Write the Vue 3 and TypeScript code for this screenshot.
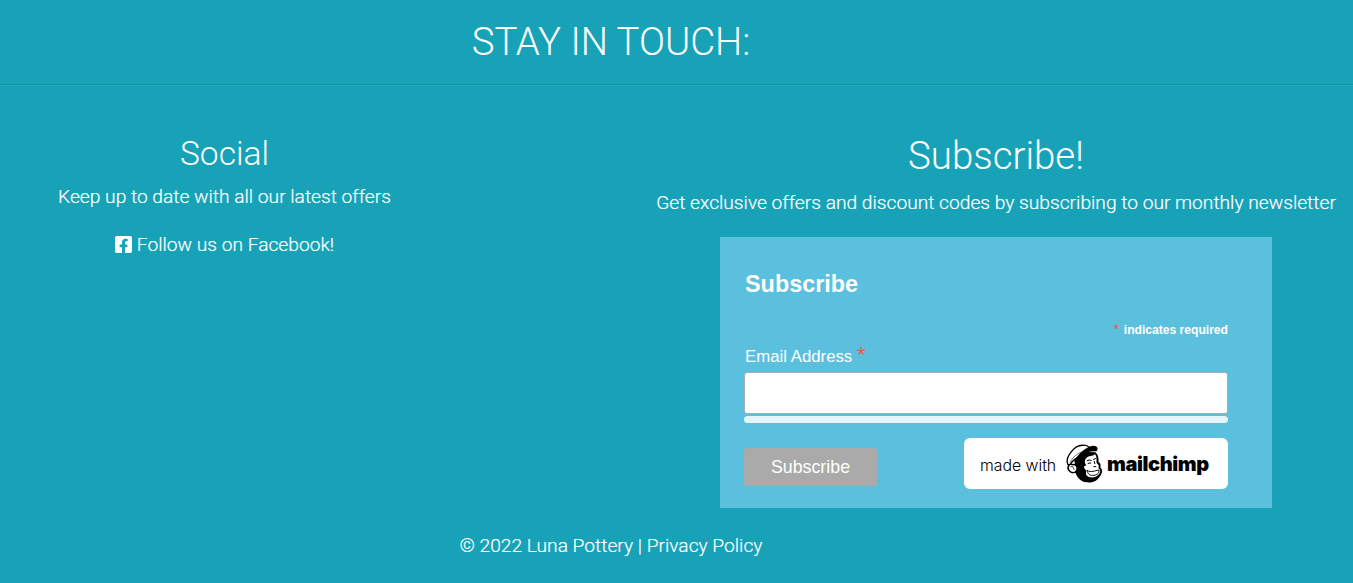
<script setup lang="ts">
import { ref } from 'vue'

const email = ref('')
</script>

<template>
  <footer class="footer">
    <h2 class="title"><span>STAY IN TOUCH:</span></h2>
    <div class="rule"></div>

    <div class="columns">
      <section class="social">
        <h3>Social</h3>
        <p class="lead">Keep up to date with all our latest offers</p>
        <a class="facebook">
          <svg viewBox="0 0 448 448" aria-hidden="true">
            <path fill="#fff" d="M400 0H48A48 48 0 0 0 0 48v352a48 48 0 0 0 48 48h137V296h-63v-72h63v-55c0-62 37-96 94-96 27 0 55 5 55 5v61h-31c-31 0-40 19-40 38v47h68l-11 72h-57v152h137a48 48 0 0 0 48-48V48a48 48 0 0 0-48-48z" />
          </svg>
          <span>Follow us on Facebook!</span>
        </a>
      </section>

      <section class="newsletter">
        <h2>Subscribe!</h2>
        <p class="lead">Get exclusive offers and discount codes by subscribing to our monthly newsletter</p>
        <form class="card" @submit.prevent>
          <h4>Subscribe</h4>
          <div class="required"><span class="star">*</span> indicates required</div>
          <label for="email">Email Address <span class="star">*</span></label>
          <input id="email" v-model="email" type="email" />
          <div class="response"></div>
          <div class="actions">
            <button type="submit">Subscribe</button>
            <a class="badge">
              <span class="made">made with</span>
              <svg class="chimp" viewBox="0 0 110 117" aria-hidden="true">
                <path d="M27 57C30 42 44 25 61 24L88 25C96 32 98 43 97 54C105 58 104 66 102 70C111 77 108 91 100 99C91 113 76 117 61 115C43 113 33 100 28 87C19 80 20 65 27 57Z" fill="#000" />
                <path d="M61 42C68 34 79 38 86 31C92 35 91 46 91 56C94 61 98 62 98 66C96 69 97 71 98 74C105 78 103 87 95 94C86 103 69 103 61 94C57 88 63 83 58 77C51 70 53 66 61 64C54 57 55 47 61 42Z" fill="#fff" />
                <path d="M5 61C-4 40 25 1 52 4C59 1 66 7 71 11L29 44C20 50 14 55 12 64Z" fill="#fff" stroke="#000" stroke-width="4" stroke-linejoin="round" />
                <path d="M11 56C18 40 36 26 56 20" fill="none" stroke="#000" stroke-width="1.6" />
                <path d="M24 50C38 29 57 9 80 5C94 4 98 15 91 22C72 19 50 27 36 46L27 60Z" fill="#000" />
                <path d="M20 62C7 56 2 72 9 80C15 88 27 88 32 79C36 67 28 61 20 62Z" fill="#fff" stroke="#000" stroke-width="4.5" />
                <path d="M14 68C24 65 20 73 23 76" fill="none" stroke="#000" stroke-width="2.5" stroke-linecap="round" />
                <path d="M63 50Q69 46 75 49M82 46L88 44M66 58L74 57M84 52L86 59M83 68L89 68M63 80C76 86 86 80 98 78C101 88 90 95 79 94C71 95 65 90 63 80Z" fill="none" stroke="#000" stroke-width="3" stroke-linecap="round" stroke-linejoin="round" />
              </svg>
              <span class="brand">mailchimp</span>
            </a>
          </div>
        </form>
      </section>
    </div>

    <p class="legal"><span>© 2022 Luna Pottery | <a>Privacy Policy</a></span></p>
  </footer>
</template>

<style>
body {
  margin: 0;
  background: #17a2b8;
}
</style>

<style scoped>
.footer {
  box-sizing: border-box;
  width: 1353px;
  height: 583px;
  overflow: hidden;
  background: #17a2b8;
  color: #fff;
  font-family: Roboto, sans-serif;
  font-weight: 300;
  display: flex;
  flex-direction: column;
}
h2, h3, h4, p {
  margin: 0;
  font-weight: 300;
  white-space: nowrap;
}
.title {
  width: 1222px;
  padding-top: 18px;
  height: 84px;
  box-sizing: border-box;
  font-size: 38.4px;
  line-height: 47px;
  text-align: center;
}
.rule {
  height: 1px;
  background: #1391a5;
  border-bottom: 1px solid #22a9be;
}
.columns {
  display: flex;
  justify-content: space-between;
  height: 422px;
}
.social {
  width: 449px;
  padding-top: 48px;
  box-sizing: border-box;
  text-align: center;
}
.social h3 {
  font-size: 33.6px;
  line-height: 40px;
}
.lead {
  font-size: 19.2px;
  line-height: 29px;
}
.lead, .facebook, .legal {
  -webkit-text-stroke: 0.2px #fff;
}
.social .lead {
  margin-top: 8px;
}
.facebook {
  display: flex;
  justify-content: center;
  align-items: center;
  gap: 5px;
  margin-top: 19px;
  font-size: 19.2px;
  line-height: 29px;
}
.facebook svg {
  width: 17px;
  height: 17px;
}
.newsletter {
  width: 714px;
  padding-top: 47px;
  box-sizing: border-box;
  display: flex;
  flex-direction: column;
  align-items: center;
}
.newsletter h2 {
  font-size: 38.4px;
  line-height: 46px;
}
.newsletter .lead {
  margin-top: 9px;
}
.card {
  box-sizing: border-box;
  width: 552px;
  height: 271px;
  margin-top: 20px;
  padding: 32px 44px 0 24px;
  background: #5bc0de;
  font-family: "Liberation Sans", Arial, sans-serif;
  font-weight: 400;
  display: flex;
  flex-direction: column;
}
.card h4 {
  font-size: 23.4px;
  line-height: 30px;
  font-weight: 700;
  padding-left: 1px;
}
.required {
  height: 18px;
  margin-top: 21px;
  font-size: 12.1px;
  line-height: 18px;
  text-align: right;
  font-weight: 700;
}
.star {
  color: #e85c41;
}
.required .star {
  margin-right: 1px;
  font-size: 15px;
  font-weight: 400;
}
label {
  height: 20px;
  margin-top: 7px;
  padding-left: 1px;
  font-size: 16.8px;
  line-height: 20px;
}
label .star {
  font-size: 22px;
}
input {
  box-sizing: border-box;
  flex: none;
  width: 100%;
  height: 42px;
  margin: 7px 0 0;
  padding: 8px;
  border: 1px solid #a5adb0;
  border-radius: 3px;
  background: #fff;
  outline: none;
}
.response {
  height: 7px;
  margin-top: 2px;
  border-radius: 4px;
  background: #e2f5fb;
}
.actions {
  display: flex;
  justify-content: space-between;
  align-items: flex-start;
  margin-top: 15px;
}
button {
  width: 133px;
  height: 38px;
  margin: 10px 0 0;
  padding: 0;
  border: 0;
  border-radius: 3px;
  background: #aaa;
  color: #fff;
  font: 400 17.8px "Liberation Sans", Arial, sans-serif;
}
.badge {
  box-sizing: border-box;
  display: flex;
  align-items: center;
  width: 264px;
  height: 51px;
  padding-left: 16px;
  border-radius: 6px;
  background: #fff;
  color: #000;
  white-space: nowrap;
  font-family: Inter, sans-serif;
}
.made {
  width: 76px;
  margin-top: 4px;
  font-size: 15.8px;
  line-height: 20px;
  font-weight: 300;
}
.chimp {
  width: 37px;
  height: 39px;
  margin-left: 10px;
}
.brand {
  margin-left: 4px;
  margin-top: 1px;
  font-size: 20px;
  line-height: 24px;
  font-weight: 900;
  letter-spacing: -0.4px;
}
.legal {
  width: 1222px;
  margin-top: 23px;
  font-size: 19.2px;
  line-height: 29px;
  text-align: center;
}
</style>
